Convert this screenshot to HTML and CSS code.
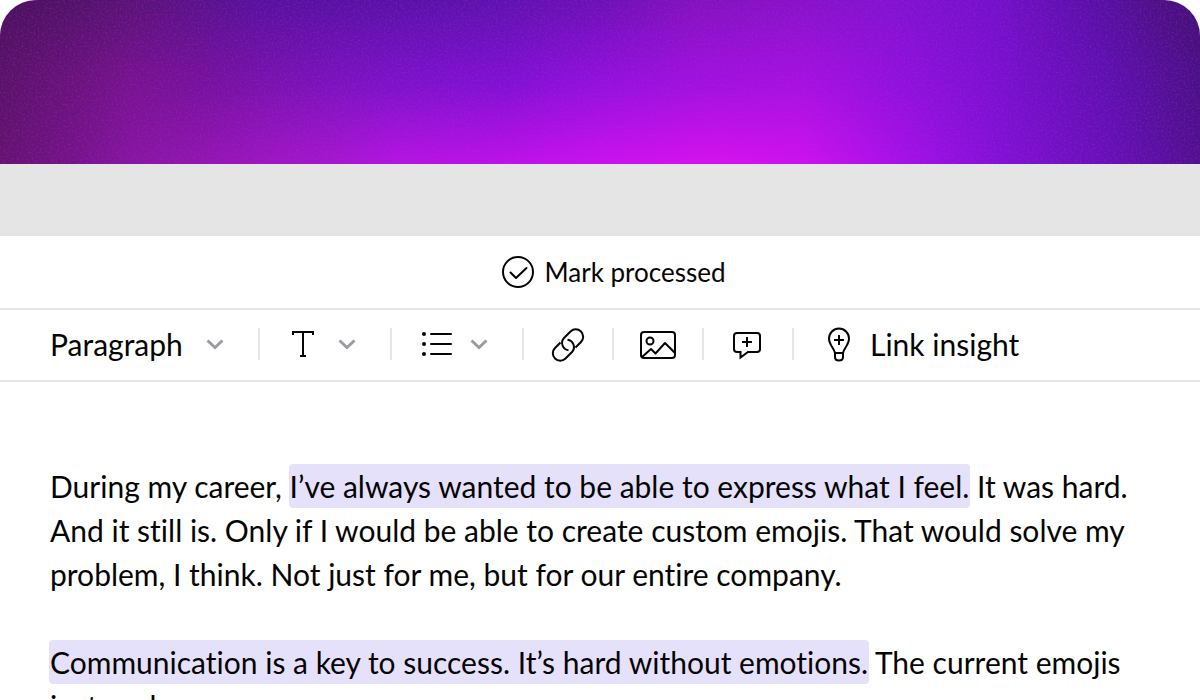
FILE: index.html
```html
<!DOCTYPE html>
<html lang="en">
<head>
<meta charset="utf-8">
<meta name="viewport" content="width=device-width, initial-scale=1">
<title>Note editor</title>
<link rel="stylesheet" href="styles.css">
</head>
<body>
<main class="card">
  <div class="banner" aria-hidden="true">
    <div class="glow glow-middle"></div>
    <div class="glow glow-bottom"></div>
    <svg class="grain" width="100%" height="100%">
      <filter id="grain" x="0" y="0" width="100%" height="100%">
        <feTurbulence type="fractalNoise" baseFrequency="0.5" numOctaves="2" seed="4"/>
        <feColorMatrix values="0 0 0 0 0.6  0 0 0 0 0.01  0 0 0 0 0.8  1.2 0 0 0 -0.5"/>
      </filter>
      <rect width="100%" height="100%" filter="url(#grain)"/>
    </svg>
  </div>
  <div class="strip"></div>

  <header class="status">
    <button class="button button-status" type="button">
      <svg class="icon" width="32" height="32" viewBox="0 0 32 32" aria-hidden="true"><circle cx="16" cy="16" r="15"/><path d="M8.500 16.500l5.500 5.500L24.500 12" stroke-linecap="round" stroke-linejoin="round"/></svg>
      Mark processed
    </button>
  </header>

  <div class="toolbar" role="toolbar" aria-label="Formatting">
    <div class="group group-first">
      <label class="picker">
        <select class="select" aria-label="Text style"><option>Paragraph</option></select>
        <svg class="chevron" width="18" height="12" viewBox="0 0 18 12" aria-hidden="true"><path d="M1.500 2.500L9 9.500l7.500-7"/></svg>
      </label>
    </div>
    <div class="group">
      <button class="button button-menu" type="button" aria-label="Text format" aria-haspopup="menu">
        <svg class="icon" width="32" height="32" viewBox="0 0 32 32" aria-hidden="true"><path d="M5 6V4h20v2M15 4v24M13 28h4" stroke-linecap="square"/></svg>
        <svg class="chevron" width="18" height="12" viewBox="0 0 18 12" aria-hidden="true"><path d="M1.500 2.500L9 9.500l7.500-7"/></svg>
      </button>
    </div>
    <div class="group">
      <button class="button button-menu" type="button" aria-label="List" aria-haspopup="menu">
        <svg class="icon" width="32" height="32" viewBox="0 0 32 32" aria-hidden="true"><path d="M11 6h20M11 16h20M11 26h20" stroke-linecap="round"/><g class="solid"><circle cx="4" cy="6" r="2"/><circle cx="4" cy="16" r="2"/><circle cx="4" cy="26" r="2"/></g></svg>
        <svg class="chevron" width="18" height="12" viewBox="0 0 18 12" aria-hidden="true"><path d="M1.500 2.500L9 9.500l7.500-7"/></svg>
      </button>
    </div>
    <div class="group group-tool">
      <button class="button" type="button" aria-label="Insert link">
        <svg class="icon" width="40" height="40" viewBox="0 0 40 40" aria-hidden="true"><path d="M27.500 23.500l5.500-5.500a7.400 7.400 0 0 0-10.500-10.500l-6.500 6.500a7.400 7.400 0 0 0 4.500 12.300M12.500 18.500l-5.500 5.500a7.400 7.400 0 0 0 10.500 10.500l6.500-6.500a7.400 7.400 0 0 0-4.500-12.300"/></svg>
      </button>
    </div>
    <div class="group group-tool">
      <button class="button" type="button" aria-label="Insert image">
        <svg class="icon" width="40" height="40" viewBox="0 0 40 40" aria-hidden="true"><rect x="3" y="8" width="34" height="26" rx="3"/><circle cx="12" cy="17" r="3.500"/><path d="M4 33l9-8 4.500 4.500L27 19l10 10" stroke-linejoin="round"/></svg>
      </button>
    </div>
    <div class="group group-tool">
      <button class="button" type="button" aria-label="Add comment">
        <svg class="icon" width="40" height="40" viewBox="0 0 40 40" aria-hidden="true"><path d="M9 9h20a3 3 0 0 1 3 3v13a3 3 0 0 1-3 3H20l-7.500 5.500V28H9a3 3 0 0 1-3-3V12a3 3 0 0 1 3-3zM19 13v10M14 18h10"/></svg>
      </button>
    </div>
    <div class="group group-insight">
      <button class="button button-insight" type="button">
        <svg class="icon" width="40" height="40" viewBox="0 0 40 40" aria-hidden="true"><path d="M17 29c-.6-4.500-6-8-6-14.500a10 10 0 0 1 20 0C31 21 25.600 24.500 25 29M17 29h8M17 29v4q0 3.500 4 3.500t4-3.500v-4M21 11v10M16 16h10" stroke-linejoin="round"/></svg>
        Link insight
      </button>
    </div>
  </div>

  <article class="note">
    <p class="text">During my career, <mark class="highlight">I’ve always wanted to be able to express what I feel.</mark> It was hard. And it still is. Only if I would be able to create custom emojis. That would solve my problem, I think. Not just for me, but for our entire company.</p>
    <p class="text"><mark class="highlight">Communication is a key to success. It’s hard without emotions.</mark> The current emojis just such</p>
  </article>
</main>
</body>
</html>
```
FILE: styles.css
```css
* {
  box-sizing: border-box;
}

body {
  margin: 0;
  background: #fff;
  color: #050505;
  font-family: Lato, "Open Sans", sans-serif;
  font-size: 30px;
  font-variant-ligatures: none;
  line-height: 44px;
}

.card {
  height: 100vh;
  overflow: hidden;
  border-radius: 36px 36px 0 0;
  background: #fff;
}

/* Three horizontal colour rows, blended into each other from top to bottom */
.banner {
  display: grid;
  height: 164px;
  background: linear-gradient(90deg, #461358, #4c1564 6%, #561573 11%, #551588 17%, #52139c 22%, #5413a4 33%, #5a14ac 42%, #6812b4 50%, #8014bc 58%, #8414c8 67%, #7e14d0 75%, #7012c8 83%, #5212a0 92%, #4a1286 96%, #401270);
}

.glow,
.grain {
  grid-area: 1 / 1;
}

.glow-middle {
  background: linear-gradient(90deg, #551565, #661578 6%, #74158c 11%, #72149b 17%, #7614aa 22%, #7814bc 28%, #7814c8 33%, #7c12d2 42%, #9012dc 50%, #9e12de 58%, #a412e0 67%, #8e12dc 75%, #7812d0 83%, #5c12b0 92%, #461284);
  mask-image: linear-gradient(transparent, #000 50%);
}

.glow-bottom {
  background: linear-gradient(90deg, #60156c, #721588 6%, #8418a0 11%, #9018b0 17%, #9a18c0 22%, #a418ce 28%, #b415e0 33%, #bc12e8 42%, #ca12ee 50%, #d612ee 60%, #cc12ee 67%, #a412e6 75%, #8012d6 83%, #6412b8 92%, #4c128c);
  mask-image: linear-gradient(transparent 50%, #000);
}

.grain {
  z-index: 1;
  display: block;
  opacity: 0.6;
}

.strip {
  height: 72px;
  background: #e5e5e5;
}

.status,
.toolbar {
  display: flex;
  align-items: center;
  border-bottom: 2px solid #e5e5e5;
}

.status {
  justify-content: center;
  height: 74px;
  padding-left: 27px;
}

.toolbar {
  height: 72px;
  padding: 0 0 2px 50px;
}

.button,
.select {
  margin: 0;
  padding: 0;
  border: 0;
  background: none;
  color: inherit;
  font: inherit;
  cursor: pointer;
}

.button {
  display: flex;
  align-items: center;
}

.button-status {
  gap: 11px;
  font-size: 26px;
}

.button-menu {
  gap: 18px;
}

.button-insight {
  gap: 12px;
}

.group {
  display: flex;
  align-items: center;
  height: 32px;
  padding: 0 34px 0 28px;
  border-right: 2px solid #e5e5e5;
}

.group-first {
  padding-left: 0;
}

.group-tool {
  padding: 0 24px;
}

.group-insight {
  padding: 0 24px;
  border-right: 0;
}

.picker {
  display: grid;
  align-items: center;
}

.picker > * {
  grid-area: 1 / 1;
}

.picker .chevron {
  justify-self: end;
  pointer-events: none;
}

.select {
  padding-right: 41px;
  appearance: none;
}

.icon {
  flex: none;
  fill: none;
  stroke: #050505;
  stroke-width: 2;
}

.solid {
  fill: #050505;
  stroke: none;
}

.chevron {
  flex: none;
  fill: none;
  stroke: #9b9ba3;
  stroke-width: 3;
}

.note {
  padding: 82px 50px 0;
}

.text {
  margin: 0 0 44px;
}

.highlight {
  margin: 0 -1px;
  padding: 4px 1px;
  border-radius: 4px;
  background: #e6e1fb;
  color: inherit;
}
```
